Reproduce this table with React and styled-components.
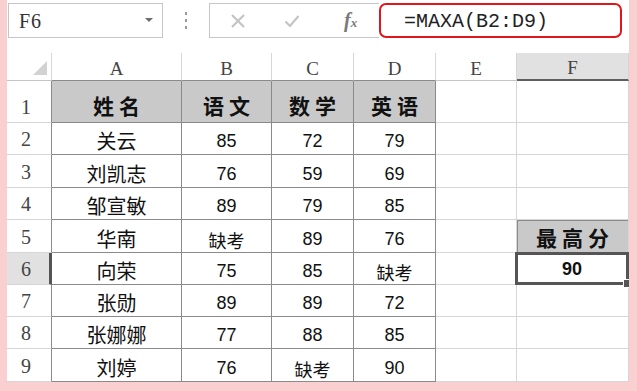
import React from "react";
import styled, { createGlobalStyle } from "styled-components";

const GlobalStyle = createGlobalStyle`
  html, body {
    margin: 0;
    padding: 0;
    background: #f9cfd0;
  }
`;

const columns = ["A", "B", "C", "D", "E", "F"];

const data = [
  ["姓名", "语文", "数学", "英语"],
  ["关云", "85", "72", "79"],
  ["刘凯志", "76", "59", "69"],
  ["邹宣敏", "89", "79", "85"],
  ["华南", "缺考", "89", "76"],
  ["向荣", "75", "85", "缺考"],
  ["张勋", "89", "89", "72"],
  ["张娜娜", "77", "88", "85"],
  ["刘婷", "76", "缺考", "90"],
];

const rowHeights = [42, 32, 33, 32, 33, 32, 32, 32, 33];

export default function App() {
  return (
    <>
      <GlobalStyle />
      <Frame>
        <Panel>
          <Toolbar>
            <NameBox>
              <span>F6</span>
              <Caret />
            </NameBox>
            <Grip>
              <i />
              <i />
              <i />
            </Grip>
            <ButtonBox>
              <ToolIcon viewBox="0 0 16 16">
                <path d="M2 2 L14 14 M14 2 L2 14" />
              </ToolIcon>
              <ToolIcon viewBox="0 0 16 16">
                <path d="M1.5 8.5 L6 13 L14.5 3" />
              </ToolIcon>
              <Fx>
                f<sub>x</sub>
              </Fx>
            </ButtonBox>
            <FormulaBox>=MAXA(B2:D9)</FormulaBox>
          </Toolbar>

          <Sheet $rows={rowHeights}>
            <Corner>
              <Triangle />
            </Corner>
            {columns.map((c, i) => (
              <ColHead key={c} $active={c === "F"} $table={i < 4}>
                {c}
              </ColHead>
            ))}

            {data.map((row, r) => (
              <React.Fragment key={r}>
                <RowHead $active={r === 5}>{r + 1}</RowHead>
                {row.map((v, c) => (
                  <Cell
                    key={c}
                    $head={r === 0}
                    $name={c === 0 && r > 0}
                    $small={v === "缺考"}
                    $table
                  >
                    {v}
                  </Cell>
                ))}
                <Cell $afterTable />
                {r === 4 ? (
                  <Cell $result>最高分</Cell>
                ) : r === 5 ? (
                  <Selected>
                    90
                    <Handle />
                  </Selected>
                ) : (
                  <Cell $lastCol />
                )}
              </React.Fragment>
            ))}
          </Sheet>
        </Panel>
      </Frame>
    </>
  );
}

const Frame = styled.div`
  padding: 0 8px 9px 7px;
  width: 637px;
  height: 391px;
  box-sizing: border-box;
`;

const Panel = styled.div`
  background: #fff;
  width: 622px;
  height: 382px;
  overflow: hidden;
`;

const Toolbar = styled.div`
  height: 53px;
  display: flex;
  align-items: flex-start;
  padding: 3px 0 0 1px;
  box-sizing: border-box;
`;

const NameBox = styled.div`
  width: 155px;
  height: 35px;
  border: 1px solid #c6c6c6;
  box-sizing: border-box;
  display: flex;
  align-items: center;
  justify-content: space-between;
  padding: 2px 9px 0 10px;
  font-family: "Liberation Serif", serif;
  font-size: 20px;
  letter-spacing: 1px;
  color: #333;
`;

const Caret = styled.div`
  width: 0;
  height: 0;
  border-left: 4px solid transparent;
  border-right: 4px solid transparent;
  border-top: 4px solid #6d6d6d;
  margin-top: -4px;
`;

const Grip = styled.div`
  width: 46px;
  height: 35px;
  display: flex;
  flex-direction: column;
  align-items: center;
  justify-content: center;
  gap: 4px;

  i {
    display: block;
    width: 2px;
    height: 3px;
    background: #9a9a9a;
  }
`;

const ButtonBox = styled.div`
  width: 170px;
  height: 35px;
  border: 1px solid #c6c6c6;
  border-right: none;
  box-sizing: border-box;
  display: flex;
  align-items: center;
  padding-left: 20px;
  gap: 38px;
`;

const ToolIcon = styled.svg`
  width: 16px;
  height: 16px;
  fill: none;
  stroke: #c4c4c4;
  stroke-width: 2.2;
`;

const Fx = styled.span`
  font-family: "Liberation Serif", serif;
  font-style: italic;
  font-weight: bold;
  font-size: 20px;
  color: #7a7a7a;
  margin-left: 6px;

  sub {
    font-size: 13px;
    vertical-align: 0;
  }
`;

const FormulaBox = styled.div`
  width: 243px;
  height: 35px;
  border: 2px solid #e1161d;
  border-radius: 7px;
  box-sizing: border-box;
  display: flex;
  align-items: center;
  padding: 2px 0 0 23px;
  font-family: "Liberation Mono", monospace;
  font-size: 20px;
  color: #222;
`;

const Sheet = styled.div`
  display: grid;
  grid-template-columns: 45px 130px 90px 82px 82px 81px 112px;
  grid-template-rows: 28px ${(p) => p.$rows.map((h) => `${h}px`).join(" ")};
`;

const Corner = styled.div`
  border-right: 1px solid #d6d6d6;
  border-bottom: 1px solid #c4c4c4;
  display: flex;
  align-items: flex-end;
  justify-content: flex-end;
  padding: 0 4px 5px 0;
`;

const Triangle = styled.div`
  width: 0;
  height: 0;
  border-left: 14px solid transparent;
  border-bottom: 14px solid #d2d2d2;
`;

const ColHead = styled.div`
  display: flex;
  align-items: center;
  justify-content: center;
  padding-top: 4px;
  font-family: "Liberation Serif", serif;
  font-size: 19px;
  color: #444;
  background: ${(p) => (p.$active ? "#e1e1e1" : "#fff")};
  border-right: 1px solid #d6d6d6;
  border-bottom: ${(p) =>
    p.$active ? "2px solid #5e5e5e" : p.$table ? "1px solid #8a8a8a" : "1px solid #c4c4c4"};
`;

const RowHead = styled.div`
  display: flex;
  align-items: flex-end;
  padding: 0 0 3px 14px;
  font-family: "Liberation Serif", serif;
  font-size: 20px;
  color: #444;
  background: ${(p) => (p.$active ? "#e1e1e1" : "#fff")};
  border-bottom: 1px solid #d6d6d6;
  border-right: ${(p) => (p.$active ? "3px solid #555" : "1px solid #8a8a8a")};
`;

const Cell = styled.div`
  display: flex;
  align-items: flex-end;
  justify-content: center;
  padding-bottom: ${(p) => (p.$head ? "6px" : p.$name || p.$small ? "3px" : "4px")};
  box-sizing: border-box;
  color: #111;
  font-family: ${(p) =>
    p.$head || p.$name || p.$small || p.$result
      ? '"Noto Sans CJK SC", sans-serif'
      : '"Liberation Sans", Arial, sans-serif'};
  font-size: ${(p) =>
    p.$head || p.$result ? "21px" : p.$name ? "20px" : "18px"};
  font-weight: ${(p) => (p.$head || p.$result ? 700 : 400)};
  letter-spacing: ${(p) => (p.$head || p.$result ? "5px" : "0")};
  text-indent: ${(p) => (p.$head || p.$result ? "5px" : "0")};
  line-height: 1;
  background: ${(p) => (p.$head || p.$result ? "#c9c9c9" : "#fff")};
  border-right: 1px solid ${(p) => (p.$table ? "#8a8a8a" : "#d6d6d6")};
  border-bottom: 1px solid ${(p) => (p.$table ? "#8a8a8a" : "#d6d6d6")};
  box-shadow: ${(p) => (p.$result ? "inset 1px 1px 0 #8a8a8a" : "none")};
`;

const Selected = styled.div`
  position: relative;
  display: flex;
  align-items: center;
  justify-content: center;
  padding-top: 2px;
  margin: -1px 0 0 -2px;
  border: 3px solid #555;
  font-family: "Liberation Sans", Arial, sans-serif;
  font-weight: 700;
  font-size: 18px;
  color: #111;
  background: #fff;
`;

const Handle = styled.div`
  position: absolute;
  right: -6px;
  bottom: -6px;
  width: 7px;
  height: 7px;
  background: #555;
  border: 1px solid #fff;
`;
